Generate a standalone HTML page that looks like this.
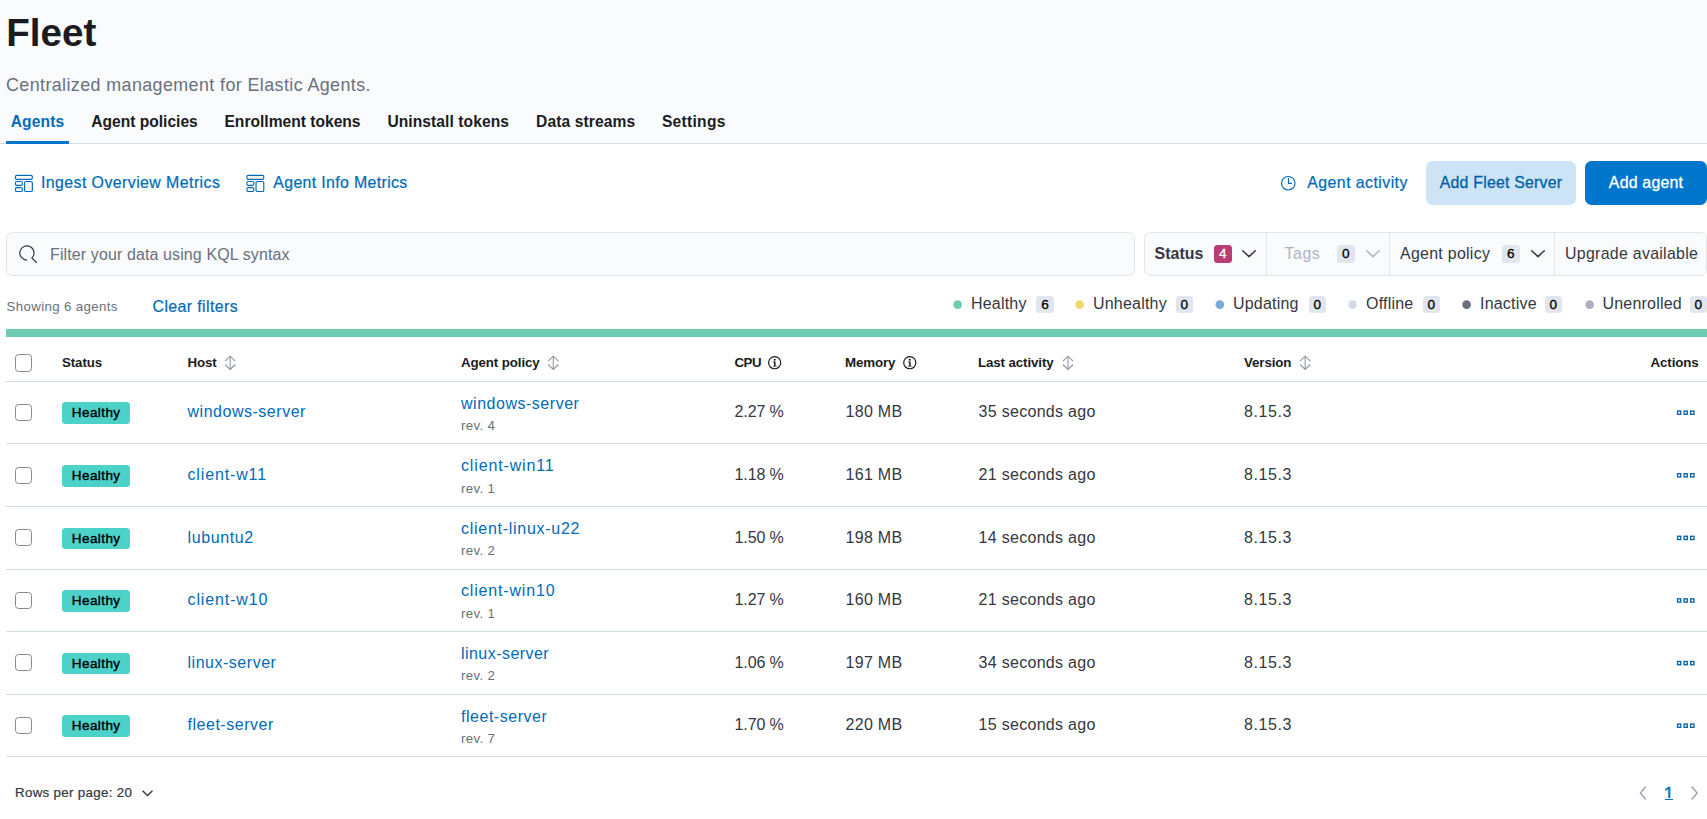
<!DOCTYPE html>
<html lang="en">
<head>
<meta charset="utf-8">
<title>Fleet - Agents</title>
<style>
*{box-sizing:border-box;margin:0;padding:0}
html,body{width:1707px;height:819px;overflow:hidden;background:#fff}
body{font-family:"Liberation Sans",sans-serif;color:#343741;font-size:16px;position:relative;-webkit-font-smoothing:antialiased}
a{text-decoration:none;color:#006bb8}
.abs{position:absolute;white-space:nowrap}
svg{display:block;overflow:visible}

/* ---------- header ---------- */
.hdr{position:absolute;left:0;top:0;width:1707px;height:144px;background:#fafbfd;border-bottom:1px solid #d3dae6}
h1{position:absolute;left:6.2px;top:9px;font-size:38.6px;line-height:48px;font-weight:700;color:#1a1c21;letter-spacing:0;white-space:nowrap}
.sub{position:absolute;left:6px;top:73px;font-size:17.9px;letter-spacing:.4px;line-height:24px;color:#69707d;white-space:nowrap}
.tabs{position:absolute;left:6px;top:100px;height:44px;display:flex}
.tab{position:relative;height:44px;line-height:43px;font-size:15.6px;font-weight:700;color:#1a1c21;white-space:nowrap;text-align:center}
.tab.sel{color:#006bb8}
.tab.sel:after{content:"";position:absolute;left:0;right:0;bottom:0;height:3px;background:#0077cc}

/* ---------- toolbar ---------- */
.lnk{-webkit-text-stroke:.22px #006bb8;position:absolute;top:171px;height:24px;line-height:24px;font-size:15.9px;letter-spacing:.43px;color:#006bb8;white-space:nowrap}
.ico{position:absolute}
.btn{position:absolute;top:161px;height:44px;line-height:43px;border-radius:6.5px;font-size:15.9px;letter-spacing:.2px;text-align:center;white-space:nowrap}
.btn.light{left:1426px;width:150px;background:#cce4f5;color:#0061a6;-webkit-text-stroke:.3px #0061a6}
.btn.fill{left:1585px;width:122px;background:#0077cc;color:#fff;-webkit-text-stroke:.3px #fff}

/* ---------- search / filters ---------- */
.search{position:absolute;left:6px;top:232px;width:1129px;height:44px;border:1px solid #e2e4e9;border-radius:6.5px;background:#fafbfd}
.search .ph{position:absolute;left:43px;top:10px;line-height:24px;font-size:16px;letter-spacing:.11px;color:#69707d;white-space:nowrap}
.fgrp{position:absolute;left:1144px;top:232px;width:563px;height:44px;border:1px solid #e2e4e9;border-radius:6.5px;background:#fafbfd}
.fgrp .div{position:absolute;top:0;width:1px;height:42px;background:#e4e6ea}
.ftxt{position:absolute;top:242px;line-height:24px;font-size:15.9px;letter-spacing:.3px;color:#343741;white-space:nowrap}
.nb{position:absolute;height:17.5px;width:17.8px;border-radius:3.5px;background:#e0e5ee;color:#000;font-size:13.6px;line-height:17.5px;text-align:center;font-weight:400;-webkit-text-stroke:.3px #000}
.nb.s{height:17px;width:16.7px;line-height:17px}
.nb.s6{height:17px;width:18px;line-height:17px}
.nb.acc{background:#ba3d76;color:#fff;-webkit-text-stroke:.3px #fff}

/* ---------- status legend ---------- */
.dot{position:absolute;top:300.3px;width:8.6px;height:8.6px;border-radius:50%;margin-left:.4px}
.lg{position:absolute;top:292px;line-height:24px;font-size:16px;letter-spacing:.2px;color:#343741;white-space:nowrap}
.bar{position:absolute;left:6px;top:329px;width:1701px;height:8px;background:#6dccb1}

/* ---------- table ---------- */
.th{position:absolute;top:351px;line-height:24px;font-size:13.3px;letter-spacing:-.1px;font-weight:700;color:#1a1c21;white-space:nowrap}
.hl{position:absolute;left:6px;width:1701px;height:1px;background:#d3dae6}
.cb{position:absolute;left:15px;width:17px;height:17px;border:1.1px solid #86898f;border-radius:3.6px;background:#fff}
.row{position:absolute;left:0;width:1707px;height:62.6px}
.row>*{position:absolute;white-space:nowrap}
.badge{left:62px;top:20.6px;width:68px;height:21.7px;border-radius:3.5px;background:#4dd2ca;color:#000;font-size:13.5px;font-weight:400;-webkit-text-stroke:.4px #000;letter-spacing:.42px;text-indent:.4px;line-height:21.5px;text-align:center}
.c{top:18.6px;line-height:24px;font-size:16px;color:#343741;letter-spacing:.3px}
a.c{color:#006bb8;letter-spacing:.52px}
.host{left:187.5px}
.pol{left:461px;top:9.8px}
.rev{left:461px;top:34.2px;line-height:20px;font-size:13.3px;color:#69707d;letter-spacing:.35px}
.cpu{left:734.5px;letter-spacing:-.1px}.mem{left:845.5px}.act{left:978.5px}.ver{left:1244px;letter-spacing:.6px}
.dots{left:1676.9px;top:28.6px}
.foot{-webkit-text-stroke:.22px #343741;position:absolute;top:781px;line-height:24px;font-size:13.3px;letter-spacing:.33px;color:#343741;white-space:nowrap}
</style>
</head>
<body>

<div class="hdr">
  <h1>Fleet</h1>
  <div class="sub">Centralized management for Elastic Agents.</div>
  <div class="tabs">
    <div class="tab sel" style="width:63px;letter-spacing:.12px">Agents</div>
    <div class="tab" style="width:117px;margin-left:17px">Agent policies</div>
    <div class="tab" style="width:145px;margin-left:17px">Enrollment tokens</div>
    <div class="tab" style="width:131px;margin-left:17px;letter-spacing:.07px;text-indent:1.4px">Uninstall tokens</div>
    <div class="tab" style="width:109px;margin-left:17px;letter-spacing:.1px;text-indent:2.2px">Data streams</div>
    <div class="tab" style="width:73px;margin-left:17px;letter-spacing:.27px;text-indent:2.6px">Settings</div>
  </div>
</div>

<!-- toolbar -->
<svg class="ico" style="left:14px;top:174px" width="19" height="18" viewBox="-0.85 -0.85 19 18" fill="none" stroke="#006bb8" stroke-width="1.15"><rect x=".58" y=".58" width="16.9" height="3.9" rx="1.4"/><rect x=".58" y="6.68" width="6.95" height="3.8" rx="1.4"/><rect x=".58" y="12.78" width="6.95" height="3.9" rx="1.4"/><rect x="9.73" y="6.68" width="7.75" height="10" rx="1.4"/></svg>
<a class="lnk" style="left:40.9px">Ingest Overview Metrics</a>
<svg class="ico" style="left:246px;top:174px" width="19" height="18" viewBox="-0.3 -0.85 19 18" fill="none" stroke="#006bb8" stroke-width="1.15"><rect x=".58" y=".58" width="16.9" height="3.9" rx="1.4"/><rect x=".58" y="6.68" width="6.95" height="3.8" rx="1.4"/><rect x=".58" y="12.78" width="6.95" height="3.9" rx="1.4"/><rect x="9.73" y="6.68" width="7.75" height="10" rx="1.4"/></svg>
<a class="lnk" style="left:273.3px;letter-spacing:.35px">Agent Info Metrics</a>

<svg class="ico" style="left:1280px;top:175px" width="17" height="17" viewBox="-0 -0 17 17" fill="none" stroke="#006bb8" stroke-width="1.15"><circle cx="8.3" cy="8.2" r="6.75"/><path d="M8.5 3V8.4H11.9"/></svg>
<a class="lnk" style="left:1307.3px">Agent activity</a>
<div class="btn light">Add Fleet Server</div>
<div class="btn fill">Add agent</div>

<!-- search -->
<div class="search">
  <svg class="ico" style="left:10px;top:10px" width="22" height="22" viewBox="-0.3 -0.3 22 22" fill="none" stroke="#343741" stroke-width="1.2"><path d="M9.9 16.75A7.1 7.1 0 1 1 14.6 14.7L19.5 19.4"/></svg>
  <div class="ph">Filter your data using KQL syntax</div>
</div>

<!-- filter group -->
<div class="fgrp">
  <div class="div" style="left:121px"></div>
  <div class="div" style="left:244px"></div>
  <div class="div" style="left:409px"></div>
</div>
<div class="ftxt" style="left:1154.5px;font-weight:700;letter-spacing:.05px">Status</div>
<div class="nb acc" style="left:1214px;top:245px">4</div>
<svg class="ico" style="left:1242px;top:250px" width="14" height="8" viewBox="-0 -0 14 8" fill="none" stroke="#343741" stroke-width="1.5"><path d="M.7.8L7 6.6L13.3.8" stroke-linejoin="round" stroke-linecap="round"/></svg>
<div class="ftxt" style="left:1284.5px;color:#abb4c4;letter-spacing:.55px">Tags</div>
<div class="nb" style="left:1337px;top:245px">0</div>
<svg class="ico" style="left:1366px;top:250px" width="14" height="8" viewBox="-0 -0 14 8" fill="none" stroke="#abb4c4" stroke-width="1.5"><path d="M.7.8L7 6.6L13.3.8" stroke-linejoin="round" stroke-linecap="round"/></svg>
<div class="ftxt" style="left:1400px">Agent policy</div>
<div class="nb" style="left:1502px;top:245px">6</div>
<svg class="ico" style="left:1531px;top:250px" width="14" height="8" viewBox="-0 -0 14 8" fill="none" stroke="#343741" stroke-width="1.5"><path d="M.7.8L7 6.6L13.3.8" stroke-linejoin="round" stroke-linecap="round"/></svg>
<div class="ftxt" style="left:1565px">Upgrade available</div>

<!-- status legend -->
<div class="abs" style="left:6.5px;top:295px;line-height:24px;font-size:13.3px;letter-spacing:.35px;color:#69707d">Showing 6 agents</div>
<a class="abs" style="left:152.5px;top:295px;line-height:24px;font-size:15.9px;letter-spacing:.4px;-webkit-text-stroke:.22px #006bb8">Clear filters</a>

<div class="lg" style="left:971px">Healthy</div><div class="nb s6" style="left:1036px;top:296px">6</div>
<div class="lg" style="left:1093px">Unhealthy</div><div class="nb s" style="left:1176px;top:296px">0</div>
<div class="lg" style="left:1233px">Updating</div><div class="nb s" style="left:1309px;top:296px">0</div>
<div class="lg" style="left:1366px">Offline</div><div class="nb s" style="left:1423px;top:296px">0</div>
<div class="lg" style="left:1480px">Inactive</div><div class="nb s" style="left:1545px;top:296px">0</div>
<div class="lg" style="left:1602.5px">Unenrolled</div><div class="nb s" style="left:1690px;top:296px">0</div>

<svg class="ico" style="left:940px;top:295px" width="670" height="20" viewBox="940 295 670 20"><circle cx="957.6" cy="304.65" r="4.3" fill="#6dccb1"/><circle cx="1079.6" cy="304.65" r="4.3" fill="#f1d86f"/><circle cx="1219.8" cy="304.65" r="4.3" fill="#79aad9"/><circle cx="1352.6" cy="304.65" r="4.3" fill="#d3dae6"/><circle cx="1466.6" cy="304.65" r="4.3" fill="#69707d"/><circle cx="1589.7" cy="304.65" r="4.3" fill="#abb1c0"/></svg>
<div class="bar"></div>

<!-- table header -->
<div class="cb" style="top:354px;height:18px"></div>
<div class="th" style="left:62px">Status</div>
<div class="th" style="left:187.5px">Host</div>
<div class="th" style="left:461px">Agent policy</div>
<div class="th" style="left:734.5px;letter-spacing:-.5px">CPU</div>
<div class="th" style="left:845px">Memory</div>
<div class="th" style="left:978px">Last activity</div>
<div class="th" style="left:1244px">Version</div>
<div class="th" style="left:1650.5px">Actions</div>
<svg class="ico" style="left:224px;top:355px" width="12" height="15" viewBox="-0.4 -0.5 12 15" fill="none" stroke="#8e95a3" stroke-width="1.05"><path d="M.7 5.6L5.8.7L10.9 5.6M.7 9L5.8 13.9L10.9 9M5.8 1V13.6"/></svg>
<svg class="ico" style="left:547px;top:355px" width="12" height="15" viewBox="-0.45 -0.5 12 15" fill="none" stroke="#8e95a3" stroke-width="1.05"><path d="M.7 5.6L5.8.7L10.9 5.6M.7 9L5.8 13.9L10.9 9M5.8 1V13.6"/></svg>
<svg class="ico" style="left:767px;top:355px" width="15" height="15" viewBox="-0.45 -0.5 15 15"><circle cx="7.2" cy="7.2" r="6.05" fill="none" stroke="#1a1c21" stroke-width="1.2"/><circle cx="7.3" cy="4.25" r="1.05" fill="#1a1c21"/><path d="M5.6 6.1H8.1V10.2H9.1V11.1H5.5V10.2H6.6V7H5.6Z" fill="#1a1c21"/></svg>
<svg class="ico" style="left:902px;top:355px" width="15" height="15" viewBox="-0.55 -0.5 15 15"><circle cx="7.2" cy="7.2" r="6.05" fill="none" stroke="#1a1c21" stroke-width="1.2"/><circle cx="7.3" cy="4.25" r="1.05" fill="#1a1c21"/><path d="M5.6 6.1H8.1V10.2H9.1V11.1H5.5V10.2H6.6V7H5.6Z" fill="#1a1c21"/></svg>
<svg class="ico" style="left:1062px;top:355px" width="12" height="15" viewBox="-0.2 -0.5 12 15" fill="none" stroke="#8e95a3" stroke-width="1.05"><path d="M.7 5.6L5.8.7L10.9 5.6M.7 9L5.8 13.9L10.9 9M5.8 1V13.6"/></svg>
<svg class="ico" style="left:1299px;top:355px" width="12" height="15" viewBox="-0.35 -0.5 12 15" fill="none" stroke="#8e95a3" stroke-width="1.05"><path d="M.7 5.6L5.8.7L10.9 5.6M.7 9L5.8 13.9L10.9 9M5.8 1V13.6"/></svg>
<div class="hl" style="top:381px"></div>

<!-- rows -->
<div class="row" style="top:381.8px">
  <div class="cb" style="top:22.2px"></div>
  <div class="badge">Healthy</div>
  <a class="c host">windows-server</a>
  <a class="c pol">windows-server</a>
  <div class="rev">rev. 4</div>
  <div class="c cpu">2.27 %</div>
  <div class="c mem">180 MB</div>
  <div class="c act">35 seconds ago</div>
  <div class="c ver">8.15.3</div>
</div>
<div class="hl" style="top:443px"></div>
<div class="row" style="top:444.4px">
  <div class="cb" style="top:22.2px"></div>
  <div class="badge">Healthy</div>
  <a class="c host" style="letter-spacing:0.86px">client-w11</a>
  <a class="c pol" style="letter-spacing:0.85px">client-win11</a>
  <div class="rev">rev. 1</div>
  <div class="c cpu">1.18 %</div>
  <div class="c mem">161 MB</div>
  <div class="c act">21 seconds ago</div>
  <div class="c ver">8.15.3</div>
</div>
<div class="hl" style="top:506px"></div>
<div class="row" style="top:507.0px">
  <div class="cb" style="top:22.2px"></div>
  <div class="badge">Healthy</div>
  <a class="c host" style="letter-spacing:0.61px">lubuntu2</a>
  <a class="c pol" style="letter-spacing:0.72px">client-linux-u22</a>
  <div class="rev">rev. 2</div>
  <div class="c cpu">1.50 %</div>
  <div class="c mem">198 MB</div>
  <div class="c act">14 seconds ago</div>
  <div class="c ver">8.15.3</div>
</div>
<div class="hl" style="top:569px"></div>
<div class="row" style="top:569.6px">
  <div class="cb" style="top:22.2px"></div>
  <div class="badge">Healthy</div>
  <a class="c host" style="letter-spacing:0.88px">client-w10</a>
  <a class="c pol" style="letter-spacing:0.83px">client-win10</a>
  <div class="rev">rev. 1</div>
  <div class="c cpu">1.27 %</div>
  <div class="c mem">160 MB</div>
  <div class="c act">21 seconds ago</div>
  <div class="c ver">8.15.3</div>
</div>
<div class="hl" style="top:631px"></div>
<div class="row" style="top:632.2px">
  <div class="cb" style="top:22.2px"></div>
  <div class="badge">Healthy</div>
  <a class="c host">linux-server</a>
  <a class="c pol" style="letter-spacing:0.45px">linux-server</a>
  <div class="rev">rev. 2</div>
  <div class="c cpu">1.06 %</div>
  <div class="c mem">197 MB</div>
  <div class="c act">34 seconds ago</div>
  <div class="c ver">8.15.3</div>
</div>
<div class="hl" style="top:694px"></div>
<div class="row" style="top:694.8px">
  <div class="cb" style="top:22.2px"></div>
  <div class="badge">Healthy</div>
  <a class="c host">fleet-server</a>
  <a class="c pol">fleet-server</a>
  <div class="rev">rev. 7</div>
  <div class="c cpu">1.70 %</div>
  <div class="c mem">220 MB</div>
  <div class="c act">15 seconds ago</div>
  <div class="c ver">8.15.3</div>
</div>
<div class="hl" style="top:756px"></div>
<svg class="ico" style="left:1676px;top:410px" width="19" height="6" viewBox="-0.9 -0.4 19 6" fill="none" stroke="#0061a6" stroke-width="1.3"><rect x=".65" y=".65" width="3.2" height="3.3"/><rect x="7.2" y=".65" width="3.2" height="3.3"/><rect x="13.75" y=".65" width="3.3" height="3.3"/></svg>
<svg class="ico" style="left:1676px;top:473px" width="19" height="6" viewBox="-0.9 -0 19 6" fill="none" stroke="#0061a6" stroke-width="1.3"><rect x=".65" y=".65" width="3.2" height="3.3"/><rect x="7.2" y=".65" width="3.2" height="3.3"/><rect x="13.75" y=".65" width="3.3" height="3.3"/></svg>
<svg class="ico" style="left:1676px;top:535px" width="19" height="6" viewBox="-0.9 -0.6 19 6" fill="none" stroke="#0061a6" stroke-width="1.3"><rect x=".65" y=".65" width="3.2" height="3.3"/><rect x="7.2" y=".65" width="3.2" height="3.3"/><rect x="13.75" y=".65" width="3.3" height="3.3"/></svg>
<svg class="ico" style="left:1676px;top:598px" width="19" height="6" viewBox="-0.9 -0.2 19 6" fill="none" stroke="#0061a6" stroke-width="1.3"><rect x=".65" y=".65" width="3.2" height="3.3"/><rect x="7.2" y=".65" width="3.2" height="3.3"/><rect x="13.75" y=".65" width="3.3" height="3.3"/></svg>
<svg class="ico" style="left:1676px;top:660px" width="19" height="6" viewBox="-0.9 -0.8 19 6" fill="none" stroke="#0061a6" stroke-width="1.3"><rect x=".65" y=".65" width="3.2" height="3.3"/><rect x="7.2" y=".65" width="3.2" height="3.3"/><rect x="13.75" y=".65" width="3.3" height="3.3"/></svg>
<svg class="ico" style="left:1676px;top:723px" width="19" height="6" viewBox="-0.9 -0.4 19 6" fill="none" stroke="#0061a6" stroke-width="1.3"><rect x=".65" y=".65" width="3.2" height="3.3"/><rect x="7.2" y=".65" width="3.2" height="3.3"/><rect x="13.75" y=".65" width="3.3" height="3.3"/></svg>
<!-- /rows -->

<!-- footer -->
<div class="foot" style="left:15px">Rows per page: 20</div>
<svg class="ico" style="left:142px;top:790px" width="11" height="7" viewBox="-0 -0 11 7" fill="none" stroke="#343741" stroke-width="1.4"><path d="M.6.7L5.5 5.6L10.4.7"/></svg>
<svg class="ico" style="left:1638px;top:786px" width="9" height="14" viewBox="0 0 9 14" fill="none" stroke="#98a2b3" stroke-width="1.4"><path d="M7.8 .5L2.4 7L7.8 13.5"/></svg>
<a class="abs" style="left:1663.4px;top:781.6px;height:16.2px;overflow:hidden;line-height:24px;font-size:19px;font-weight:400;-webkit-text-stroke:.35px #0071c2;color:#0071c2">1</a>
<div class="abs" style="left:1665px;top:799px;width:8px;height:1.2px;background:#0071c2"></div>
<svg class="ico" style="left:1690px;top:786px" width="9" height="14" viewBox="0 0 9 14" fill="none" stroke="#98a2b3" stroke-width="1.4"><path d="M1.6 .5L7.2 7L1.6 13.5"/></svg>

</body>
</html>
